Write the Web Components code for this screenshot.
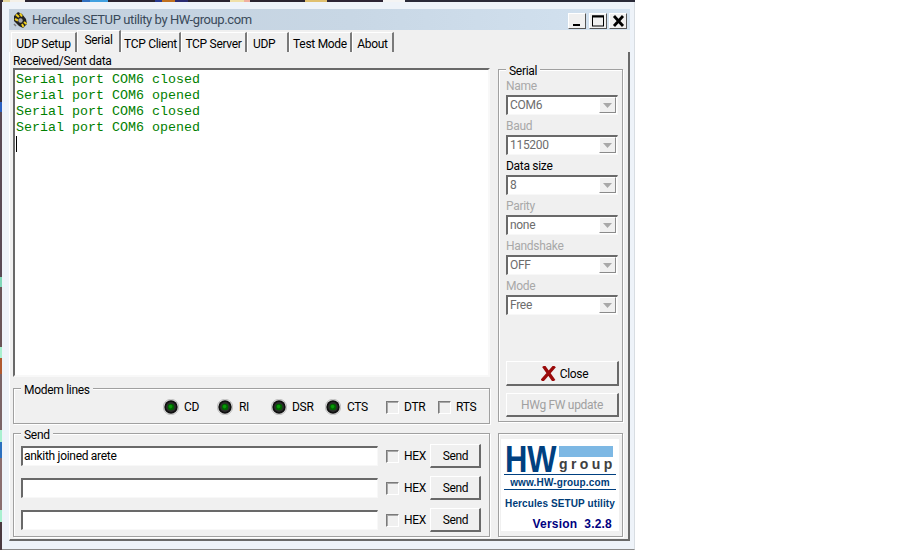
<!DOCTYPE html>
<html>
<head>
<meta charset="utf-8">
<title>Hercules SETUP utility</title>
<style>
  html, body { margin: 0; padding: 0; background: #fff; height: 550px; overflow: hidden; }
  body { font: 12px Roboto, "Liberation Sans", Arial, sans-serif; letter-spacing: -.3px; color: #000; }
</style>
</head>
<body>
<hw-window>
  <hw-title slot="title">Hercules SETUP utility by HW-group.com</hw-title>
  <hw-tabs slot="tabs"></hw-tabs>

  <hw-group slot="modem" legend="Modem lines" style="height:36px">
    <hw-modem></hw-modem>
  </hw-group>
  <hw-group slot="send" legend="Send" style="height:104px">
    <hw-send-row value="ankith joined arete"></hw-send-row>
    <hw-send-row></hw-send-row>
    <hw-send-row></hw-send-row>
  </hw-group>

  <hw-group slot="serial" legend="Serial" style="height:353px">
    <hw-serial></hw-serial>
  </hw-group>
  <hw-group slot="logo" style="height:104px">
    <hw-logo></hw-logo>
  </hw-group>
</hw-window>

<script>
function el(name, html) {
  customElements.define(name, class extends HTMLElement {
    constructor() {
      super();
      this.attachShadow({ mode: 'open' }).innerHTML = html;
    }
  });
}

el('hw-window', `
  <style>
    :host { display: block; width: 635px; height: 550px; }
    .strip { height: 2px; background: linear-gradient(90deg, #3a3038 0 3px, #e8d9a0 3px 10px, #f4f0e8 10px 25px, #2a2430 25px 82px, #2f6fc0 82px 90px, #3fa0e0 90px 108px, #2a2430 108px 155px, #283a90 155px 162px, #c07020 162px 175px, #2a2a70 175px 188px, #2a2430 188px 230px, #f0e0a8 230px 244px, #f0b0a0 244px 250px, #2a2430 250px 305px, #e0c070 305px 327px, #2c2434 327px 383px, #f4f4f4 383px 405px, #2a2a38 405px 100%); }
    .row { display: flex; height: 548px; }
    .edge { width: 2px; background: linear-gradient(180deg, #3a3038 0 100px, #2a60c0 100px 110px, #5a4a55 110px 275px, #80d8b8 275px 285px, #6a5558 285px 345px, #a8f0d0 345px 356px, #b05a30 356px 372px, #7a6468 372px 428px, #a8f0d0 428px 440px, #2a70c0 440px 456px, #8a6e70 456px 508px, #a8f0d0 508px 520px, #4a3a40 520px 100%); }
    .frame { width: 633px; box-sizing: border-box; padding: 7px 4px 0 7px; height: 548px; background: #eef3f9; border-right: 1px solid #d8dde2; border-bottom: 1px solid #8a8a8a; }
    .panel { box-sizing: border-box; height: 490px; background: #f0f0f0; border-top: 1px solid #fff; border-left: 1px solid #fff; border-right: 2px solid #696969; border-bottom: 2px solid #696969; padding: 3px 5px 0 3px; display: grid; grid-template-columns: 477px 125px; column-gap: 8px; }
    .left, .right { display: flex; flex-direction: column; }
    .label { height: 13px; line-height: 13px; }
    .log { box-sizing: border-box; height: 309px; background: #fff; border: 2px solid; border-color: #696969 #f8f8f8 #f8f8f8 #696969; padding: 2px 1px; font: 13.33px/16px "Liberation Mono", "Courier New", monospace; letter-spacing: 0; color: #008000; }
    .log div { height: 16px; white-space: pre; }
    .caret { width: 1px; height: 16px; background: #000; }
    .gap-modem { height: 11px; }
    .gap-send { height: 9px; }
    .spacer-serial { height: 14px; }
    .gap-logo { height: 11px; }
  </style>
  <div class="strip"></div>
  <div class="row">
    <div class="edge"></div>
    <div class="frame">
      <slot name="title"></slot>
      <slot name="tabs"></slot>
      <div class="panel">
        <div class="left">
          <div class="label">Received/Sent data</div>
          <div class="log">
            <div>Serial port COM6 closed</div>
            <div>Serial port COM6 opened</div>
            <div>Serial port COM6 closed</div>
            <div>Serial port COM6 opened</div>
            <div class="caret"></div>
          </div>
          <div class="gap-modem"></div>
          <slot name="modem"></slot>
          <div class="gap-send"></div>
          <slot name="send"></slot>
        </div>
        <div class="right">
          <div class="spacer-serial"></div>
          <slot name="serial"></slot>
          <div class="gap-logo"></div>
          <slot name="logo"></slot>
        </div>
      </div>
    </div>
  </div>
`);

el('hw-title', `
  <style>
    :host { display: flex; align-items: center; height: 21px; background: linear-gradient(90deg, #c3d0dd, #c8d7e5 55%, #d3e2f0); font: 13px/21px Roboto, "Liberation Sans", Arial, sans-serif; letter-spacing: -.4px; color: #3a4a5a; }
    svg.icon { margin: 0 4px 0 3px; flex: none; }
    .text { flex: 1; }
    .btns { display: flex; margin: 2px 3px 0 0; }
    .b { box-sizing: border-box; width: 18px; height: 16px; background: #f0f0f0; border: 1px solid; border-color: #fff #555 #555 #fff; display: flex; align-items: center; justify-content: center; }
  </style>
  <svg class="icon" width="16" height="18" viewBox="0 0 16 18">
    <path d="M2 5 L6 1 L10 3 L14 8 L15 13 L11 17 L7 15 L2 10 Z" fill="#222"/>
    <path d="M4 3.5 L7 6 M8 2.5 L10 5.5 M12 11 L14.5 13 M10 13 L11.5 16 M3 8 L6 9.5" stroke="#f0d020" stroke-width="2" fill="none"/>
    <circle cx="8.5" cy="9.5" r="2.2" fill="#aaa"/>
    <path d="M2 13 L4 15" stroke="#7a7a7a" stroke-width="1.5"/>
  </svg>
  <span class="text"><slot></slot></span>
  <div class="btns">
    <div class="b"><svg width="12" height="12" viewBox="0 0 12 12"><rect x="2" y="9" width="7" height="2" fill="#000"/></svg></div>
    <div class="b" style="margin-left:3px"><svg width="14" height="12" viewBox="0 0 14 12"><rect x="1.5" y="1" width="11" height="10" fill="none" stroke="#000"/><rect x="1" y="0.5" width="12" height="2" fill="#000"/></svg></div>
    <div class="b" style="margin-left:2px"><svg width="13" height="12" viewBox="0 0 13 12"><path d="M2 1 L11 11 M11 1 L2 11" stroke="#000" stroke-width="2.8"/></svg></div>
  </div>
`);

el('hw-tabs', `
  <style>
    :host { display: flex; height: 22px; padding-left: 2px; align-items: flex-end; background: #f0f0f0; margin-bottom: -1px; position: relative; z-index: 1; }
    .t { box-sizing: border-box; height: 20px; line-height: 22px; text-align: center; background: #f0f0f0; border-top: 1px solid #fff; border-left: 1px solid #fff; border-right: 2px solid #7a7a7a; white-space: nowrap; }
    .t.on { height: 22px; line-height: 19px; padding-bottom: 2px; }
  </style>
  <div class="t" style="width:66px">UDP Setup</div>
  <div class="t on" style="width:44px">Serial</div>
  <div class="t" style="width:60px">TCP Client</div>
  <div class="t" style="width:66px">TCP Server</div>
  <div class="t" style="width:42px;text-align:left;padding-left:5px">UDP</div>
  <div class="t" style="width:63px">Test Mode</div>
  <div class="t" style="width:42px">About</div>
`);

customElements.define('hw-group', class extends HTMLElement {
  constructor() {
    super();
    const legend = this.getAttribute('legend');
    this.attachShadow({ mode: 'open' }).innerHTML = `
      <style>
        :host { display: block; box-sizing: border-box; position: relative; border: 1px solid #a0a0a0; box-shadow: 1px 1px 0 #fff, inset 1px 1px 0 #fff; }
        .legend { position: absolute; left: 7px; top: -6px; padding: 0 3px; height: 14px; line-height: 14px; background: #f0f0f0; }
      </style>
      ${legend ? `<div class="legend">${legend}</div>` : ''}
      <slot></slot>`;
  }
});

el('hw-led', `
  <style>
    :host { display: block; width: 16px; height: 16px; flex: none; }
  </style>
  <svg width="16" height="16" viewBox="0 0 16 16">
    <circle cx="8" cy="8" r="7.8" fill="#e4e4e4" stroke="#9a9a9a" stroke-width=".5"/>
    <circle cx="8" cy="8" r="6.7" fill="#101010"/>
    <circle cx="8" cy="8" r="5" fill="#2c2c2c"/>
    <circle cx="8" cy="8" r="3.3" fill="#006400"/>
    <circle cx="7.6" cy="7.6" r="1.8" fill="#0a9a0a"/>
  </svg>
`);

el('hw-check', `
  <style>
    :host { display: block; flex: none; box-sizing: border-box; width: 13px; height: 13px; background: #f0f0f0; border: 1px solid; border-color: #7a7a7a #fff #fff #7a7a7a; box-shadow: inset 1px 1px 0 #a8a8a8; }
  </style>
`);

el('hw-modem', `
  <style>
    :host { display: flex; align-items: center; height: 34px; padding-top: 2px; box-sizing: border-box; justify-content: flex-end; padding-right: 11px; }
    .i { display: flex; align-items: center; gap: 5px; flex: none; }
  </style>
  <div class="i"><hw-led></hw-led><span style="width:15px">CD</span></div>
  <div class="i" style="margin-left:18px;gap:6px"><hw-led></hw-led><span style="width:11px">RI</span></div>
  <div class="i" style="margin-left:21px"><hw-led></hw-led><span style="width:22px">DSR</span></div>
  <div class="i" style="margin-left:11px;gap:6px"><hw-led></hw-led><span style="width:20px">CTS</span></div>
  <div class="i" style="margin-left:19px"><hw-check></hw-check><span style="width:23px">DTR</span></div>
  <div class="i" style="margin-left:11px"><hw-check></hw-check><span style="width:22px">RTS</span></div>
`);

customElements.define('hw-send-row', class extends HTMLElement {
  constructor() {
    super();
    this.attachShadow({ mode: 'open' }).innerHTML = `
      <style>
        :host { display: flex; align-items: center; height: 32px; padding-left: 7px; }
        .input { box-sizing: border-box; width: 357px; height: 20px; line-height: 17px; padding-left: 1px; background: #fff; border: 2px solid; border-color: #696969 #f8f8f8 #f8f8f8 #696969; border-width: 2px 1px 1px 2px; white-space: nowrap; }
        hw-check { margin-left: 8px; }
        .hex { margin-left: 5px; width: 26px; }
        hw-button { width: 51px; height: 24px; padding-left: 1px; }
      </style>
      <div class="input">${this.getAttribute('value') || ''}</div>
      <hw-check></hw-check>
      <span class="hex">HEX</span>
      <hw-button>Send</hw-button>`;
  }
  connectedCallback() {
    this.style.marginTop = this.previousElementSibling ? '0' : '6px';
  }
});

el('hw-button', `
  <style>
    :host { display: flex; box-sizing: border-box; align-items: center; justify-content: center; gap: 4px; background: #f0f0f0; border: 2px solid; border-color: #fff #696969 #696969 #fff; border-width: 1px 2px 2px 1px; flex: none; }
    :host([disabled]) { color: #a0a0a0; }
  </style>
  <slot></slot>
`);

customElements.define('hw-combo', class extends HTMLElement {
  constructor() {
    super();
    const off = this.hasAttribute('disabled');
    this.attachShadow({ mode: 'open' }).innerHTML = `
      <style>
        :host { display: block; height: 40px; box-sizing: border-box; padding-top: 4px; }
        .lab { height: 16px; line-height: 15px; color: ${off ? '#a8a8a8' : '#000'}; }
        .box { box-sizing: border-box; width: 112px; height: 20px; display: flex; background: #fff; border: 2px solid; border-color: #696969 #f8f8f8 #f8f8f8 #696969; border-width: 2px 1px 1px 2px; padding-right: 1px; }
        .val { flex: 1; line-height: 17px; padding-left: 2px; color: #6d6d6d; }
        .arr { box-sizing: border-box; width: 17px; height: 16px; background: #f0f0f0; border: 1px solid; border-color: #fff #8a8a8a #8a8a8a #fff; display: flex; align-items: center; justify-content: center; }
      </style>
      <div class="lab">${this.getAttribute('label')}</div>
      <div class="box">
        <div class="val">${this.getAttribute('value')}</div>
        <div class="arr"><svg width="9" height="5" viewBox="0 0 9 5"><path d="M0 0H9L4.5 5Z" fill="#a8a8a8"/></svg></div>
      </div>`;
  }
});

el('hw-serial', `
  <style>
    :host { display: flex; flex-direction: column; height: 351px; box-sizing: border-box; padding: 5px 4px 4px 7px; }
    hw-button { width: 113px; }
    .close { height: 25px; margin-top: auto; padding: 1px 0 0 5px; }
    .fw { height: 24px; margin-top: 7px; }
  </style>
  <hw-combo disabled label="Name" value="COM6"></hw-combo>
  <hw-combo disabled label="Baud" value="115200"></hw-combo>
  <hw-combo label="Data size" value="8"></hw-combo>
  <hw-combo disabled label="Parity" value="none"></hw-combo>
  <hw-combo disabled label="Handshake" value="OFF"></hw-combo>
  <hw-combo disabled label="Mode" value="Free"></hw-combo>
  <hw-button class="close">
    <svg width="15" height="15" viewBox="0 0 15 15"><path d="M3.5 1.5 L12 13.5 M12.5 1.5 L2 13.5" stroke="#9a0a0a" stroke-width="3.4" stroke-linecap="square" fill="none"/></svg>
    <span>Close</span>
  </hw-button>
  <hw-button class="fw" disabled>HWg FW update</hw-button>
`);

el('hw-logo', `
  <style>
    :host { display: block; box-sizing: border-box; width: 118px; height: 92px; margin: 5px 0 0 2px; background: #fff; padding: 7px 3px 0; color: #003c78; font-family: "Liberation Sans", Arial, sans-serif; font-weight: bold; letter-spacing: 0; }
    .top { display: flex; height: 28px; }
    .hw { width: 54px; margin: 1px 0 0 1px; font-size: 36px; line-height: 26px; color: #004080; transform: scaleX(.86); transform-origin: left top; white-space: nowrap; }
    .side { width: 54px; }
    .bar { height: 11px; background: #7db8e4; }
    .grp { font-size: 14px; line-height: 14px; letter-spacing: 3.4px; color: #404040; }
    .url { border-top: 1px solid #004080; border-bottom: 1px solid #004080; height: 14px; line-height: 15px; font-size: 10px; text-align: center; letter-spacing: .15px; white-space: nowrap; }
    .name { margin-top: 8px; font-size: 10px; line-height: 12px; letter-spacing: .1px; text-align: center; white-space: nowrap; }
    .ver { margin-top: 7px; font-size: 12px; line-height: 14px; color: #000080; text-align: right; padding-right: 4px; letter-spacing: .2px; white-space: pre; }
  </style>
  <div class="top">
    <div class="hw">HW</div>
    <div class="side"><div class="bar"></div><div class="grp">group</div></div>
  </div>
  <div class="url">www.HW-group.com</div>
  <div class="name">Hercules SETUP utility</div>
  <div class="ver">Version  3.2.8</div>
`);
</script>
</body>
</html>
